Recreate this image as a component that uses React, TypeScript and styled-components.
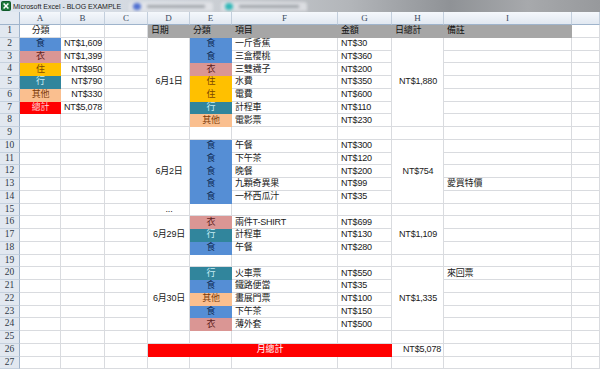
import React from "react";
import styled, { createGlobalStyle } from "styled-components";

type Cat = "食" | "衣" | "住" | "行" | "其他" | "總計";

const CAT_COLORS: Record<Cat, { bg: string; fg: string }> = {
  食: { bg: "#558ed5", fg: "#0f2a52" },
  衣: { bg: "#da9694", fg: "#5e1d1b" },
  住: { bg: "#ffc000", fg: "#7a4600" },
  行: { bg: "#31859c", fg: "#c9eef6" },
  其他: { bg: "#fabf8f", fg: "#7a3a08" },
  總計: { bg: "#ff0000", fg: "#ffd6d6" },
};

const COL_LETTERS = ["A", "B", "C", "D", "E", "F", "G", "H", "I", ""];
const ROW_COUNT = 27;
const GRID_LINE = "#d9dbdf";

const summary: [Cat, string][] = [
  ["食", "NT$1,609"],
  ["衣", "NT$1,399"],
  ["住", "NT$950"],
  ["行", "NT$790"],
  ["其他", "NT$330"],
  ["總計", "NT$5,078"],
];

type DayGroup = {
  date: string;
  start: number;
  total: string;
  items: [Cat, string, string][];
};

const days: DayGroup[] = [
  {
    date: "6月1日",
    start: 2,
    total: "NT$1,880",
    items: [
      ["食", "一斤香蕉", "NT$30"],
      ["食", "三盒櫻桃", "NT$360"],
      ["衣", "三雙襪子", "NT$200"],
      ["住", "水費", "NT$350"],
      ["住", "電費", "NT$600"],
      ["行", "計程車", "NT$110"],
      ["其他", "電影票", "NT$230"],
    ],
  },
  {
    date: "6月2日",
    start: 10,
    total: "NT$754",
    items: [
      ["食", "午餐", "NT$300"],
      ["食", "下午茶", "NT$120"],
      ["食", "晚餐", "NT$200"],
      ["食", "九顆奇異果", "NT$99"],
      ["食", "一杯西瓜汁", "NT$35"],
    ],
  },
  {
    date: "6月29日",
    start: 16,
    total: "NT$1,109",
    items: [
      ["衣", "兩件T-SHIRT", "NT$699"],
      ["行", "計程車", "NT$130"],
      ["食", "午餐", "NT$280"],
    ],
  },
  {
    date: "6月30日",
    start: 20,
    total: "NT$1,335",
    items: [
      ["行", "火車票", "NT$550"],
      ["食", "鐵路便當", "NT$35"],
      ["其他", "畫展門票", "NT$100"],
      ["食", "下午茶", "NT$150"],
      ["衣", "薄外套", "NT$500"],
    ],
  },
];

type Align = "left" | "center" | "right";

type CellDef = {
  row: number;
  col: number;
  rowSpan?: number;
  colSpan?: number;
  text?: string;
  align?: Align;
  cat?: Cat;
  tone?: "head" | "alert";
};

// build every cell of the sheet, merged ones first, then fill the blanks
function buildCells(): CellDef[] {
  const cells: CellDef[] = [];
  cells.push({ row: 1, col: 1, text: "分類", align: "center" });
  summary.forEach(([cat, amt], i) => {
    cells.push({ row: 2 + i, col: 1, text: cat, align: "center", cat });
    cells.push({ row: 2 + i, col: 2, text: amt, align: "right" });
  });
  ["日期", "分類", "項目", "金額", "日總計", "備註"].forEach((t, i) =>
    cells.push({ row: 1, col: 4 + i, text: t, tone: "head" })
  );
  days.forEach((d) => {
    const n = d.items.length;
    cells.push({ row: d.start, col: 4, rowSpan: n, text: d.date, align: "center" });
    cells.push({ row: d.start, col: 8, rowSpan: n, text: d.total, align: "center" });
    d.items.forEach(([cat, item, amt], i) => {
      cells.push({ row: d.start + i, col: 5, text: cat, align: "center", cat });
      cells.push({ row: d.start + i, col: 6, text: item });
      cells.push({ row: d.start + i, col: 7, text: amt });
    });
  });
  cells.push({ row: 13, col: 9, text: "愛買特價" });
  cells.push({ row: 20, col: 9, text: "來回票" });
  cells.push({ row: 15, col: 4, text: "...", align: "center" });
  cells.push({ row: 26, col: 4, colSpan: 4, text: "月總計", align: "center", tone: "alert" });
  cells.push({ row: 26, col: 8, text: "NT$5,078", align: "right" });

  const taken = new Set<string>();
  cells.forEach((c) => {
    for (let r = c.row; r < c.row + (c.rowSpan || 1); r++)
      for (let k = c.col; k < c.col + (c.colSpan || 1); k++) taken.add(`${r}-${k}`);
  });
  for (let r = 1; r <= ROW_COUNT; r++)
    for (let k = 1; k <= COL_LETTERS.length; k++)
      if (!taken.has(`${r}-${k}`)) cells.push({ row: r, col: k });
  return cells;
}

const GlobalStyle = createGlobalStyle`
  html, body {
    margin: 0;
    padding: 0;
    background: #ffffff;
    overflow: hidden;
  }
  * {
    box-sizing: border-box;
  }
`;

const Window = styled.div`
  width: 600px;
  height: 369px;
  display: flex;
  flex-direction: column;
  overflow: hidden;
  font-family: "Liberation Sans", "Noto Sans CJK TC", sans-serif;
`;

const TitleBar = styled.div`
  height: 12px;
  flex: none;
  display: flex;
  align-items: center;
  gap: 2px;
  padding-left: 1px;
  background: linear-gradient(
    90deg,
    #dfe7f1 0%,
    #d6dce4 18%,
    #c9cdd2 38%,
    #b3b6ba 58%,
    #8f9296 75%,
    #a7a9ac 88%,
    #97999c 100%
  );
  overflow: hidden;
`;

const Title = styled.span`
  font-size: 7px;
  line-height: 1;
  color: #1c1c1c;
  white-space: nowrap;
`;

const GhostTab = styled.div<{ $dot: string; $w: number }>`
  flex: none;
  width: ${(p) => p.$w}px;
  height: 9px;
  margin-left: 6px;
  display: flex;
  align-items: center;
  gap: 6px;
  padding-left: 4px;
  border-radius: 3px 3px 0 0;
  background: rgba(232, 234, 238, 0.7);
  filter: blur(1.4px);
  &::before {
    content: "";
    width: 8px;
    height: 7px;
    border-radius: 50%;
    background: ${(p) => p.$dot};
  }
  &::after {
    content: "";
    flex: 1;
    height: 3px;
    margin-right: 8px;
    background: rgba(110, 114, 122, 0.55);
  }
`;

const Sheet = styled.div`
  flex: 1;
  display: grid;
  grid-template-columns: 20px 41px 44px 43px 42px 42px 106px 54px 52px 128px 1fr;
  grid-template-rows: 13px repeat(${ROW_COUNT}, 12.75px);
  background: #ffffff;
`;

const Corner = styled.div`
  grid-row: 1;
  grid-column: 1;
  background: #e3e9f1;
  border-right: 1px solid #9fb4cc;
  border-bottom: 1px solid #9fb4cc;
`;

const ColHead = styled.div<{ $col: number }>`
  grid-row: 1;
  grid-column: ${(p) => p.$col};
  display: flex;
  align-items: center;
  justify-content: center;
  background: linear-gradient(#f5f8fc, #e1e8f1);
  border-right: 1px solid #c3cfdd;
  border-bottom: 1px solid #9fb4cc;
  font-family: "Liberation Serif", serif;
  font-size: 9px;
  line-height: 1;
  color: #3a4a60;
`;

const RowHead = styled.div<{ $row: number }>`
  grid-row: ${(p) => p.$row};
  grid-column: 1;
  display: flex;
  align-items: center;
  justify-content: center;
  background: #e2e8f0;
  border-right: 1px solid #9fb4cc;
  border-bottom: 1px solid #c6d1de;
  font-family: "Liberation Serif", serif;
  font-size: 9.5px;
  line-height: 1;
  color: #2f3946;
`;

const Cell = styled.div<{
  $row: number;
  $col: number;
  $rowSpan: number;
  $colSpan: number;
  $align: Align;
  $bg: string;
  $fg: string;
  $line: string;
}>`
  grid-row: ${(p) => p.$row} / span ${(p) => p.$rowSpan};
  grid-column: ${(p) => p.$col} / span ${(p) => p.$colSpan};
  display: flex;
  align-items: center;
  justify-content: ${(p) =>
    p.$align === "left" ? "flex-start" : p.$align === "right" ? "flex-end" : "center"};
  padding: 0 2px 0 3px;
  background: ${(p) => p.$bg};
  color: ${(p) => p.$fg};
  border-right: 1px solid ${(p) => p.$line};
  border-bottom: 1px solid ${(p) => p.$line};
  font-size: 9px;
  line-height: 1;
  letter-spacing: -0.2px;
  white-space: nowrap;
  overflow: hidden;
`;

function ExcelIcon() {
  return (
    <svg width="10" height="10" viewBox="0 0 10 10">
      <rect x="0.5" y="0.5" width="9" height="9" rx="1" fill="#1f7a3c" stroke="#0f5a28" />
      <path d="M2.6 2.4 L7.4 7.6 M7.4 2.4 L2.6 7.6" stroke="#ffffff" strokeWidth="1.5" />
    </svg>
  );
}

function cellLook(c: CellDef) {
  if (c.cat) {
    const { bg, fg } = CAT_COLORS[c.cat];
    return { bg, fg, line: bg };
  }
  if (c.tone === "head") return { bg: "#a6a6a6", fg: "#111111", line: "#a6a6a6" };
  if (c.tone === "alert") return { bg: "#ff0000", fg: "#ffffff", line: "#ff0000" };
  return { bg: "#ffffff", fg: "#1a1a1a", line: GRID_LINE };
}

export default function App() {
  const cells = buildCells();

  return (
    <>
      <GlobalStyle />
      <Window>
        <TitleBar>
          <ExcelIcon />
          <Title>Microsoft Excel - BLOG EXAMPLE</Title>
          <GhostTab $dot="#4f6fd1" $w={84} />
          <GhostTab $dot="#2fb7b7" $w={86} />
        </TitleBar>

        <Sheet>
          <Corner />
          {COL_LETTERS.map((letter, i) => (
            <ColHead key={i} $col={i + 2}>
              {letter}
            </ColHead>
          ))}
          {Array.from({ length: ROW_COUNT }, (_, i) => (
            <RowHead key={i} $row={i + 2}>
              {i + 1}
            </RowHead>
          ))}
          {cells.map((c) => {
            const look = cellLook(c);
            return (
              <Cell
                key={`${c.row}-${c.col}`}
                $row={c.row + 1}
                $col={c.col + 1}
                $rowSpan={c.rowSpan || 1}
                $colSpan={c.colSpan || 1}
                $align={c.align || "left"}
                $bg={look.bg}
                $fg={look.fg}
                $line={look.line}
              >
                {c.text}
              </Cell>
            );
          })}
        </Sheet>
      </Window>
    </>
  );
}
